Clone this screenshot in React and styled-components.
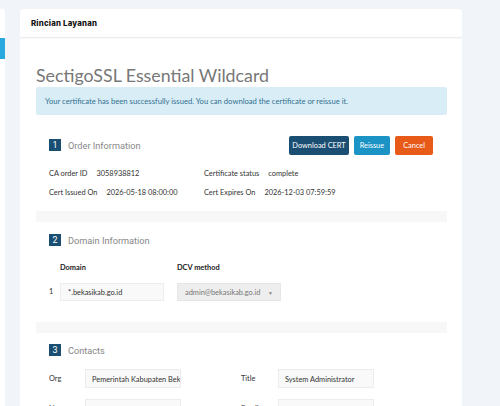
import React from "react";
import styled, { createGlobalStyle } from "styled-components";

const GlobalStyle = createGlobalStyle`
  body {
    margin: 0;
    background: #f1f5f9;
    font-family: Lato, "Liberation Sans", sans-serif;
    color: #333;
  }
`;

const Page = styled.div`
  display: flex;
  align-items: flex-start;
  padding-top: 9px;
  height: 397px;
  overflow: hidden;
`;

const Sidebar = styled.div`
  width: 5px;
  height: 420px;
  background: #fff;
  border-radius: 0 4px 0 0;
  padding-top: 29px;
  box-sizing: border-box;
`;

const SideActive = styled.div`
  height: 21px;
  background: #29a8df;
`;

const Card = styled.div`
  margin-left: 15px;
  width: 442px;
  background: #fff;
  border-radius: 4px;
  min-height: 420px;
`;

const CardHeader = styled.div`
  height: 28px;
  display: flex;
  align-items: center;
  padding-left: 11px;
  border-bottom: 1px solid #ececec;
  box-shadow: 0 1px 1px rgba(0, 0, 0, 0.03);
  font-family: Inter, "Open Sans", sans-serif;
  font-weight: 800;
  font-size: 7.8px;
  letter-spacing: 0.2px;
  color: #111;
`;

const CardBody = styled.div`
  padding: 0 15px 0 16px;
`;

const Title = styled.h1`
  margin: 0;
  padding-top: 26px;
  font-weight: 400;
  font-size: 17.8px;
  line-height: 22px;
  color: #777;
`;

const Alert = styled.div`
  margin-top: 1px;
  height: 28px;
  line-height: 28px;
  padding: 0 9px;
  background: #d9edf7;
  border-radius: 2px;
  color: #31708f;
  font-size: 7.65px;
`;

const Section = styled.div`
  padding: ${(p) => p.$top}px 14px 0 13px;
`;

const SectionHead = styled.div`
  display: flex;
  align-items: center;
  height: 20px;
`;

const Badge = styled.span`
  width: 12px;
  height: 12px;
  background: #1a4e72;
  color: #fff;
  font-family: Roboto, sans-serif;
  font-size: 9px;
  line-height: 12px;
  text-align: center;
  margin-right: 7px;
`;

const SectionName = styled.span`
  font-family: Roboto, "Open Sans", sans-serif;
  font-size: 9.2px;
  color: #888;
  flex: 1;
`;

const Button = styled.button`
  height: 19px;
  padding: 0 ${(p) => p.$pad}px;
  margin-left: 5px;
  border: none;
  border-radius: 2px;
  background: ${(p) => p.$bg};
  color: #fff;
  font-family: Lato, sans-serif;
  font-size: 7.4px;
`;

const InfoGrid = styled.div`
  display: grid;
  grid-template-columns: 155px 1fr;
  padding-top: 9px;
`;

const InfoCell = styled.div`
  height: 19px;
  line-height: 19px;
  font-size: 7.4px;
  white-space: nowrap;
`;

const Value = styled.span`
  margin-left: 9px;
`;

const Band = styled.div`
  height: 11px;
  background: #f7f7f7;
  margin-top: ${(p) => p.$top}px;
`;

const DomainTable = styled.div`
  display: grid;
  grid-template-columns: 11px 104px 117px;
  padding-top: 11px;
  font-size: 7.4px;
`;

const ColHead = styled.div`
  height: 14px;
  line-height: 14px;
  font-weight: 700;
  color: #222;
  margin-left: ${(p) => p.$ml || 0}px;
`;

const RowNum = styled.div`
  margin-top: 8px;
  height: 18px;
  line-height: 18px;
`;

const Input = styled.div`
  margin-top: 8px;
  height: 18px;
  line-height: 18px;
  box-sizing: border-box;
  padding: 0 7px;
  margin-left: ${(p) => p.$ml || 0}px;
  width: 104px;
  background: ${(p) => (p.$disabled ? "#eeeeee" : "#f9f9f9")};
  border: 1px solid ${(p) => (p.$disabled ? "#e6e6e6" : "#ececec")};
  color: ${(p) => (p.$disabled ? "#777" : "#333")};
  font-size: 7.4px;
  white-space: nowrap;
  overflow: hidden;
  display: flex;
  justify-content: space-between;
`;

const Caret = styled.span`
  font-size: 5px;
  color: #888;
`;

const ContactGrid = styled.div`
  display: grid;
  grid-template-columns: 36px 96px 60px 37px 96px;
  row-gap: 11px;
  padding-top: 9px;
  font-size: 7.4px;
  align-items: center;
`;

const Label = styled.div`
  white-space: nowrap;
`;

const Field = styled.div`
  height: 19px;
  line-height: 19px;
  box-sizing: border-box;
  padding: 0 6px;
  background: #f9f9f9;
  border: 1px solid #ececec;
  white-space: nowrap;
  overflow: hidden;
`;

export default function App() {
  return (
    <>
      <GlobalStyle />
      <Page>
        <Sidebar>
          <SideActive />
        </Sidebar>
        <Card>
          <CardHeader>Rincian Layanan</CardHeader>
          <CardBody>
            <Title>SectigoSSL Essential Wildcard</Title>
            <Alert>
              Your certificate has been successfully issued. You can download the certificate or reissue it.
            </Alert>

            <Section $top={20}>
              <SectionHead>
                <Badge>1</Badge>
                <SectionName>Order Information</SectionName>
                <Button $bg="#1a4e72" $pad={3}>Download CERT</Button>
                <Button $bg="#1b93c5" $pad={6}>Reissue</Button>
                <Button $bg="#e85a18" $pad={8}>Cancel</Button>
              </SectionHead>
              <InfoGrid>
                <InfoCell>CA order ID<Value>3058938812</Value></InfoCell>
                <InfoCell>Certificate status<Value>complete</Value></InfoCell>
                <InfoCell>Cert Issued On<Value>2026-05-18 08:00:00</Value></InfoCell>
                <InfoCell>Cert Expires On<Value>2026-12-03 07:59:59</Value></InfoCell>
              </InfoGrid>
            </Section>
            <Band $top={9} />

            <Section $top={8}>
              <SectionHead>
                <Badge>2</Badge>
                <SectionName>Domain Information</SectionName>
              </SectionHead>
              <DomainTable>
                <div />
                <ColHead>Domain</ColHead>
                <ColHead $ml={13}>DCV method</ColHead>
                <RowNum>1</RowNum>
                <Input>*.bekasikab.go.id</Input>
                <Input $disabled $ml={13}>
                  admin@bekasikab.go.id<Caret>▼</Caret>
                </Input>
              </DomainTable>
            </Section>
            <Band $top={21} />

            <Section $top={7}>
              <SectionHead>
                <Badge>3</Badge>
                <SectionName>Contacts</SectionName>
              </SectionHead>
              <ContactGrid>
                <Label>Org</Label>
                <Field>Pemerintah Kabupaten Bekasi</Field>
                <div />
                <Label>Title</Label>
                <Field>System Administrator</Field>
                <Label>Name</Label>
                <Field>Dinas Komunikasi</Field>
                <div />
                <Label>Email</Label>
                <Field>admin@bekasikab.go.id</Field>
              </ContactGrid>
            </Section>
          </CardBody>
        </Card>
      </Page>
    </>
  );
}
